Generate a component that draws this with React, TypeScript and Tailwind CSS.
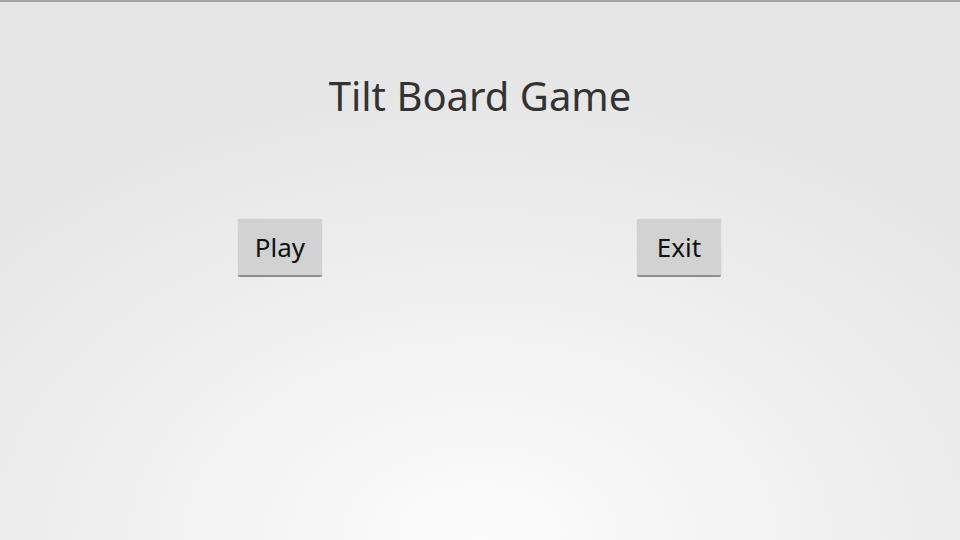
import React from 'react';

const buttons = ["Play", "Exit"];

export default function App() {
  return (
    <div
      className="w-[960px] h-[540px] overflow-hidden border-t-2 border-[#a4a4a4] bg-[radial-gradient(ellipse_70%_85%_at_50%_100%,#fcfcfc_0%,#f2f2f2_45%,#e6e6e6_100%)] text-[#333333]"
      style={{ fontFamily: '"Noto Sans", "Open Sans", sans-serif' }}
    >
      <h1 className="mt-[69px] text-center text-[40px] leading-[50px]">Tilt Board Game</h1>
      <div className="mt-[98px] pr-[1px] flex justify-center gap-[315px]">
        {buttons.map((label) => (
          <button
            key={label}
            className="w-[84px] h-[58px] bg-[#d2d2d2] border-b-2 border-[#8f8f8f] rounded-[2px] shadow-[0_0_1px_rgba(0,0,0,0.25)] text-[26px] text-[#111111]"
          >
            {label}
          </button>
        ))}
      </div>
    </div>
  );
}
